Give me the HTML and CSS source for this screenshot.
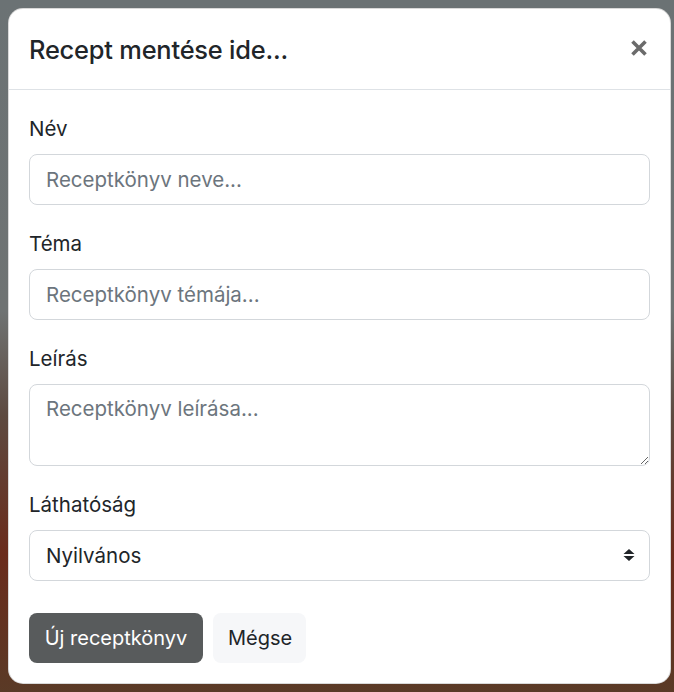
FILE: index.html
```html
<!DOCTYPE html>
<html lang="hu">
<head>
<meta charset="utf-8">
<title>Recept mentése</title>
<link rel="stylesheet" href="styles.css">
</head>
<body>
<div class="backdrop">
  <div class="modal">
    <div class="modal-header">
      <h5 class="modal-title">Recept mentése ide...</h5>
      <button class="btn-close" type="button" aria-label="Bezárás">
        <svg width="18" height="18" viewBox="0 0 18 18"><path d="M2.5 2.5 L15.5 15.5 M15.5 2.5 L2.5 15.5" stroke="#6b6b6b" stroke-width="3.6" stroke-linecap="butt"/></svg>
      </button>
    </div>
    <div class="modal-body">
      <div class="group">
        <label class="label" for="nev">Név</label>
        <input class="control" id="nev" type="text" placeholder="Receptkönyv neve...">
      </div>
      <div class="group">
        <label class="label" for="tema">Téma</label>
        <input class="control" id="tema" type="text" placeholder="Receptkönyv témája...">
      </div>
      <div class="group">
        <label class="label" for="leiras">Leírás</label>
        <textarea class="control textarea" id="leiras" placeholder="Receptkönyv leírása..."></textarea>
      </div>
      <div class="group">
        <label class="label" for="lathatosag">Láthatóság</label>
        <div class="select-wrap">
          <select class="control select" id="lathatosag">
            <option>Nyilvános</option>
            <option>Privát</option>
          </select>
          <svg class="select-icon" width="12" height="16" viewBox="0 0 12 16"><path d="M6 2 L11.5 7 H0.5 Z M0.5 9 H11.5 L6 14 Z" fill="#212529"/></svg>
        </div>
      </div>
      <div class="actions">
        <button class="btn btn-dark" type="button">Új receptkönyv</button>
        <button class="btn btn-light" type="button">Mégse</button>
      </div>
    </div>
  </div>
</div>
</body>
</html>
```

FILE: styles.css
```css
* { box-sizing: border-box; }
html, body { margin: 0; padding: 0; }
body {
  width: 674px;
  height: 692px;
  overflow: hidden;
  font-family: Inter, "Noto Sans", "Liberation Sans", sans-serif;
  color: #212529;
  background: linear-gradient(180deg, #6b7274 0%, #6f7373 45%, #5d4a40 60%, #6a2c1c 80%, #5a3a26 100%);
}
.backdrop {
  padding: 8px 3px 8px 8px;
  height: 692px;
}
.modal {
  width: 663px;
  height: 676px;
  background: #fff;
  border-radius: 15px;
  border: 1px solid rgba(0,0,0,0.15);
  display: flex;
  flex-direction: column;
  overflow: hidden;
}
.modal-header {
  display: flex;
  align-items: center;
  justify-content: space-between;
  height: 82px;
  padding: 0 22px 0 20px;
  border-bottom: 1px solid #dee2e6;
}
.modal-title {
  margin: 0;
  font-size: 25.4px;
  font-weight: 500;
  letter-spacing: -0.2px;
  line-height: 1.5;
  padding-top: 2px;
}
.btn-close {
  border: 0;
  background: transparent;
  padding: 0;
  width: 18px;
  height: 18px;
  display: flex;
  cursor: pointer;
  margin-top: -2px;
}
.modal-body {
  padding: 20px;
}
.group {
  margin-bottom: 20px;
}
.label {
  display: block;
  font-size: 20.5px;
  line-height: 30px;
  padding-top: 4px;
  margin-bottom: 10px;
}
.control {
  display: block;
  width: 100%;
  height: 51px;
  padding: 0 16px;
  font-family: inherit;
  font-size: 20.5px;
  color: #212529;
  background: #fff;
  border: 1px solid #d3d7db;
  border-radius: 8px;
  outline: none;
}
.control::placeholder { color: #6c757d; opacity: 1; }
.textarea {
  height: 82px;
  padding: 9px 16px;
  resize: vertical;
  line-height: 1.5;
}
.select-wrap { position: relative; }
.select {
  appearance: none;
  -webkit-appearance: none;
}
.select-icon {
  position: absolute;
  right: 15px;
  top: 17px;
  pointer-events: none;
}
.actions {
  display: flex;
  gap: 10px;
  padding-top: 12px;
}
.btn {
  height: 50px;
  padding: 0 15px;
  font-family: inherit;
  font-size: 20px;
  border: 0;
  border-radius: 8px;
  cursor: pointer;
}
.btn-dark { background: #585b5c; color: #fff; width: 174px; }
.btn-light { background: #f6f7f9; color: #212529; width: 93px; }
```
